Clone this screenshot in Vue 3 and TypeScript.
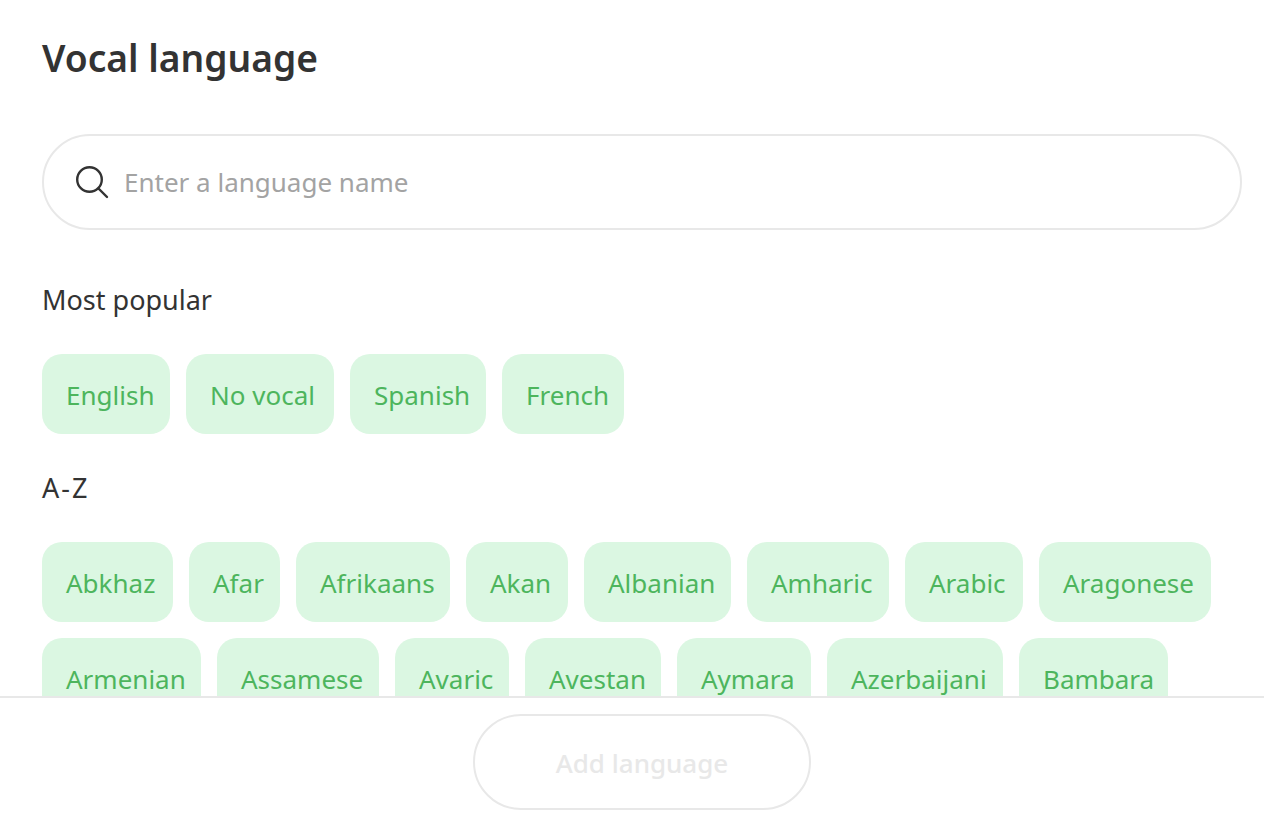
<script setup lang="ts">
interface Chip {
  name: string
  width: number
}
const popular: Chip[] = [
  { name: 'English', width: 128 },
  { name: 'No vocal', width: 148 },
  { name: 'Spanish', width: 136 },
  { name: 'French', width: 122 },
]
const az: Chip[] = [
  { name: 'Abkhaz', width: 131 },
  { name: 'Afar', width: 91 },
  { name: 'Afrikaans', width: 154 },
  { name: 'Akan', width: 102 },
  { name: 'Albanian', width: 147 },
  { name: 'Amharic', width: 142 },
  { name: 'Arabic', width: 118 },
  { name: 'Aragonese', width: 172 },
  { name: 'Armenian', width: 159 },
  { name: 'Assamese', width: 162 },
  { name: 'Avaric', width: 114 },
  { name: 'Avestan', width: 136 },
  { name: 'Aymara', width: 134 },
  { name: 'Azerbaijani', width: 176 },
  { name: 'Bambara', width: 149 },
]
</script>

<template>
  <div class="page">
    <div class="scroll">
      <h1 class="title">Vocal language</h1>
      <div class="search">
        <svg class="icon" width="36" height="36" viewBox="0 0 36 36" fill="none" stroke="#333" stroke-width="2.4" stroke-linecap="round">
          <circle cx="13.5" cy="15.5" r="12.3" />
          <path d="M22.5 24.5l8.5 8.5" />
        </svg>
        <span class="placeholder">Enter a language name</span>
      </div>
      <div class="label">Most popular</div>
      <div class="chips">
        <span v-for="c in popular" :key="c.name" class="chip" :style="{ width: c.width + 'px' }">{{ c.name }}</span>
      </div>
      <div class="label az">A-Z</div>
      <div class="chips">
        <span v-for="c in az" :key="c.name" class="chip" :style="{ width: c.width + 'px' }">{{ c.name }}</span>
      </div>
    </div>
    <div class="footer">
      <button class="add" disabled>Add language</button>
    </div>
  </div>
</template>

<style>
html, body { margin: 0; background: #fff; }
</style>

<style scoped>
.page {
  height: 824px;
  display: flex;
  flex-direction: column;
  font-family: "Noto Sans", "Open Sans", sans-serif;
  color: #333;
  overflow: hidden;
}
.scroll {
  height: 696px;
  overflow: hidden;
  padding: 0 22px 0 42px;
  box-sizing: border-box;
}
.title {
  margin: 35px 0 0;
  font-size: 37.2px;
  line-height: 46px;
  font-weight: 600;
}
.search {
  margin-top: 53px;
  height: 96px;
  box-sizing: border-box;
  border: 2px solid #e8e8e8;
  border-radius: 48px;
  display: flex;
  align-items: center;
  padding-left: 32px;
  gap: 12px;
}
.icon { flex: none; }
.placeholder { font-size: 26px; color: #a3a3a3; }
.label {
  margin-top: 53px;
  font-size: 27px;
  line-height: 34px;
  height: 35px;
}
.label.az { margin-top: 37px; letter-spacing: 2px; }
.chips {
  margin-top: 36px;
  display: flex;
  flex-wrap: wrap;
  gap: 16px;
}
.chip {
  height: 80px;
  box-sizing: border-box;
  padding: 2px 0 0 24px;
  border-radius: 20px;
  background: #dbf7e2;
  color: #4db55d;
  font-size: 26px;
  line-height: 78px;
  white-space: nowrap;
}
.footer {
  flex: none;
  height: 128px;
  box-sizing: border-box;
  border-top: 2px solid #e8e8e8;
  padding: 16px 0 0 20px;
  display: flex;
  justify-content: center;
}
.add {
  width: 338px;
  height: 96px;
  box-sizing: border-box;
  border: 2px solid #e8e8e8;
  border-radius: 48px;
  background: #fff;
  color: #e8e8e8;
  font-family: inherit;
  font-size: 26px;
  font-weight: 500;
  padding: 2px 0 0;
}
</style>
